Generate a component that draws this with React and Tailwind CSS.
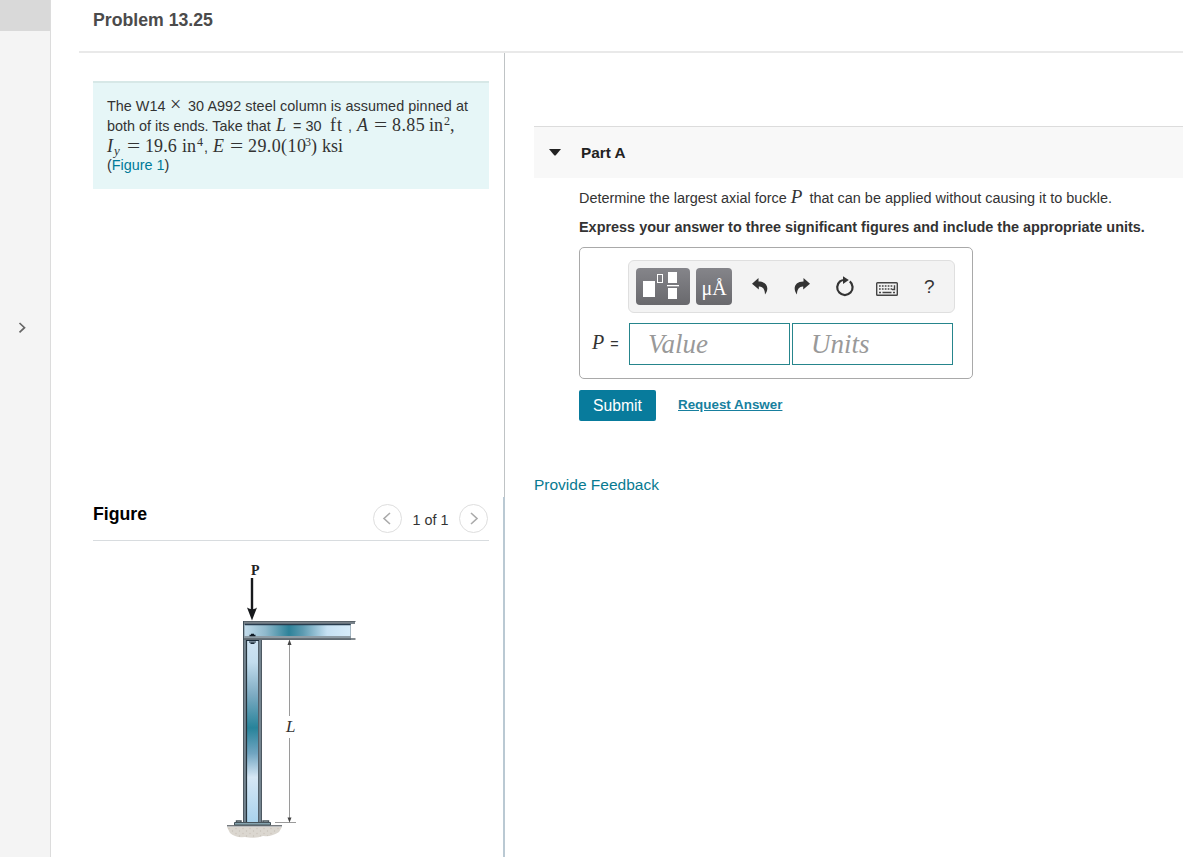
import { useState } from "react";

export default function App() {
  return (
    <div className="flex h-[857px] w-[1183px] overflow-hidden bg-white font-['Liberation_Sans',Arial,sans-serif] text-[#333]">
      <Sidebar />
      <div className="flex min-w-0 flex-1 flex-col">
        <header className="ml-7 h-[53px] shrink-0 border-b-2 border-[#e9e9e9] pt-2 pl-3.5">
          <h1 className="text-[17.7px] leading-6 font-bold text-[#4b4b4b]">Problem 13.25</h1>
        </header>
        <main className="flex min-h-0 flex-1">
          <div className="flex w-[454px] shrink-0 flex-col">
            <section className="h-[444px] shrink-0 border-r border-[#bfc3c5] pt-7 pl-[42px]">
              <ProblemStatement />
            </section>
            <FigurePanel />
          </div>
          <PartPanel />
        </main>
      </div>
    </div>
  );
}

function Sidebar() {
  return (
    <aside className="flex w-[51px] shrink-0 flex-col border-r border-[#dcdcdc] bg-[#f4f4f4]">
      <div className="h-[31px] bg-[#d9d9d9]" />
      <button type="button" aria-label="Expand" className="mt-[290px] ml-[17px] w-3">
        <svg width="10" height="13" viewBox="0 0 10 13" fill="none" stroke="#666" strokeWidth="1.7">
          <path d="M2.5 2 L7.5 6.7 L2.5 11.4" />
        </svg>
      </button>
    </aside>
  );
}

function MathText({ italic = false, className = "", children }) {
  return (
    <span className={`font-['Liberation_Serif','Times_New_Roman',serif] ${italic ? "italic" : ""} ${className}`}>
      {children}
    </span>
  );
}

function Equals() {
  return (
    <span className="w-[18px]">
      <MathText className="inline-block origin-left scale-x-130 text-[18px] leading-none">=</MathText>
    </span>
  );
}

function ProblemStatement() {
  return (
    <div className="h-[108px] w-[396px] border-t-2 border-[#d7e8e7] bg-[#e6f6f7] pt-[11px] pl-3.5 text-[14.4px] whitespace-nowrap text-[#333]">
      <p className="flex h-5 items-baseline leading-5">
        <span className="w-[63px]">The W14</span>
        <MathText className="w-[18px] text-[20px] leading-none">×</MathText>
        <span className="tracking-[0.06px]">30 A992 steel column is assumed pinned at</span>
      </p>
      <p className="mt-px flex h-5 items-baseline leading-5">
        <span className="w-[169px]">both of its ends. Take that</span>
        <MathText italic className="w-[17px] text-[18px]">L</MathText>
        <span className="w-[37px]">= 30</span>
        <MathText className="w-[18px] text-[18px] tracking-[1px]">ft</MathText>
        <span className="w-[9px]">,</span>
        <MathText italic className="w-[17px] text-[18px]">A</MathText>
        <Equals />
        <MathText className="w-[37px] text-[18px] tracking-[0.4px]">8.85</MathText>
        <MathText className="w-[15px] text-[18px]">in</MathText>
        <MathText className="-translate-y-1.5 text-[12px]">2</MathText>
        <MathText className="text-[18px]">,</MathText>
      </p>
      <p className="mt-px -mb-px flex h-5 items-baseline leading-5">
        <MathText italic className="w-[7px] text-[18px]">I</MathText>
        <MathText italic className="w-[13px] translate-y-[3px] text-[13px]">y</MathText>
        <Equals />
        <MathText className="w-[37px] text-[18px] tracking-[0.1px]">19.6</MathText>
        <MathText className="w-[15px] text-[18px]">in</MathText>
        <MathText className="w-[7px] -translate-y-1.5 text-[12px]">4</MathText>
        <span className="w-[9px]">,</span>
        <MathText italic className="w-[17px] text-[18px]">E</MathText>
        <Equals />
        <MathText className="w-[57px] text-[18px] tracking-[0.4px]">29.0(10</MathText>
        <MathText className="w-[6px] -translate-y-1.5 text-[12px]">3</MathText>
        <MathText className="w-[11px] text-[18px]">)</MathText>
        <MathText className="text-[18px]">ksi</MathText>
      </p>
      <p className="h-5 leading-5">
        (<a href="#figure" className="text-[#007a99]">Figure 1</a>)
      </p>
    </div>
  );
}

function FigurePanel() {
  return (
    <section id="figure" className="flex-1 border-r-2 border-[#bac9d3] pl-[42px]">
      <div className="flex h-11 w-[396px] border-b border-[#d8dcdf]">
        <h2 className="mt-[5px] w-[280px] text-[17.7px] leading-6 font-bold text-black">Figure</h2>
        <PageButton label="Previous" path="M17 9 L11 14.5 L17 20" />
        <span className="mt-[13px] w-[57px] text-center text-[14.4px] leading-5">1 of 1</span>
        <PageButton label="Next" path="M12 9 L18 14.5 L12 20" />
      </div>
      <ColumnDrawing />
    </section>
  );
}

function PageButton({ label, path }) {
  return (
    <button
      type="button"
      aria-label={label}
      className="mt-[7px] flex size-[29px] shrink-0 items-center justify-center rounded-full border border-[#dedede]"
    >
      <svg width="29" height="29" viewBox="0 0 29 29" className="shrink-0" fill="none" stroke="#aaa" strokeWidth="1.6">
        <path d={path} />
      </svg>
    </button>
  );
}

// steel column carrying a beam, with the load P and the length L
function ColumnDrawing() {
  return (
    <svg width="150" height="286" viewBox="220 555 150 286" className="mt-[14px] ml-[127px]">
      <defs>
        <linearGradient id="beam" x1="0" x2="1">
          <stop offset="0" stopColor="#c3dceb" />
          <stop offset="0.2" stopColor="#8fb9cc" />
          <stop offset="0.42" stopColor="#2d8299" />
          <stop offset="0.55" stopColor="#5d9bb1" />
          <stop offset="0.78" stopColor="#c6e1f3" />
          <stop offset="1" stopColor="#d6ecfa" />
        </linearGradient>
        <linearGradient id="column" x1="0" x2="0" y1="0" y2="1">
          <stop offset="0" stopColor="#cfe4f3" />
          <stop offset="0.12" stopColor="#c3ddee" />
          <stop offset="0.3" stopColor="#7dabc2" />
          <stop offset="0.48" stopColor="#27839a" />
          <stop offset="0.62" stopColor="#71a5c1" />
          <stop offset="0.75" stopColor="#d6e7f5" />
          <stop offset="1" stopColor="#a8d2ec" />
        </linearGradient>
        <pattern id="gravel" width="7" height="5" patternUnits="userSpaceOnUse">
          <rect width="7" height="5" fill="#dbd7d0" />
          <circle cx="1.5" cy="1" r="0.7" fill="#c7c1b8" />
          <circle cx="5" cy="3.5" r="0.8" fill="#cdc7be" />
        </pattern>
      </defs>

      <path d="M227 827 H282 L279 832 Q272 837 263 836 Q254 839 245 837 Q235 838 230 833 Z" fill="url(#gravel)" />
      <rect x="227" y="825" width="55" height="1.5" fill="#777b7e" />

      <rect x="243" y="638" width="19" height="186" fill="#74848f" />
      <path d="M243.5 638 V824 M261.5 638 V824" stroke="#4d5962" />
      <rect x="247" y="640" width="11" height="183" fill="url(#column)" />
      <path d="M246.5 640 V824" stroke="#26343d" strokeWidth="1.2" />
      <path d="M258.5 640 V824" stroke="#53616b" />
      <path d="M234.5 825 V822.5 H270.5 V825 Z" fill="#86a3ae" stroke="#46545b" />
      <path d="M236.5 822 V821 H241 V822 M263 822 V821 H268.5 V822" fill="none" stroke="#46545b" strokeWidth="1.4" />

      <rect x="243" y="621" width="108" height="19" fill="#74848f" />
      <rect x="244.5" y="625" width="106" height="11" fill="url(#beam)" />
      <rect x="243" y="621" width="112" height="3" fill="#78828a" />
      <path d="M243 621.5 H355.5" stroke="#596269" />
      <path d="M245 624.5 H350.5" stroke="#283c4e" strokeWidth="1.4" />
      <rect x="244" y="636" width="107" height="3" fill="#8e9ca5" />
      <path d="M243 639 H355.5" stroke="#596269" strokeWidth="1.5" />
      <path d="M243.5 621 V640" stroke="#3f4e58" />
      <path d="M249.5 635.5 H255.5 M251 634.5 H254" stroke="#101b26" strokeWidth="1.4" />
      <path d="M246 640.5 H259 M249 642 H256 M250.5 643.3 H254.5" stroke="#1c2c3a" strokeWidth="1.2" />

      <path d="M252 578 V610" stroke="#17191c" strokeWidth="2.4" />
      <path d="M252 620.5 L247 607.5 Q252 611 257 607.5 Z" fill="#17191c" />
      <text x="251" y="574.5" fontFamily="'Liberation Serif', serif" fontSize="14" fontWeight="bold" fill="#222">
        P
      </text>

      <path d="M289.5 642 V716 M289.5 738 V820 M275 822.5 H296" stroke="#9a9a9a" />
      <path d="M289.5 639.5 L287.5 645 H291.5 Z M289.5 822.5 L287.5 817.5 H291.5 Z" fill="#444" />
      <text x="286" y="732" fontFamily="'Liberation Serif', serif" fontSize="17" fontStyle="italic" fill="#333">
        L
      </text>
    </svg>
  );
}

function PartPanel() {
  return (
    <section className="min-w-0 flex-1 pt-[73px] pl-[29px]">
      <div className="flex h-[52px] items-center border-t border-[#dcdcdc] bg-[#f8f8f8] pl-[15px]">
        <svg width="12" height="7" viewBox="0 0 12 7" fill="#222">
          <path d="M0 0 H12 L7 6 Q6 7 5 6 Z" />
        </svg>
        <h2 className="ml-5 text-[15.3px] leading-5 font-bold text-[#222]">Part A</h2>
      </div>
      <div className="pt-[9px] pl-[45px] whitespace-nowrap">
        <p className="h-5 text-[14.45px] leading-5">
          Determine the largest axial force{" "}
          <MathText italic className="mr-[3px] text-[19px] leading-none">P</MathText>
          {" "}that can be applied without causing it to buckle.
        </p>
        <p className="mt-[10px] h-5 text-[14.43px] leading-5 font-bold">
          Express your answer to three significant figures and include the appropriate units.
        </p>
        <AnswerBox />
        <div className="mt-[11px] flex">
          <button type="button" className="h-[31px] w-[77px] rounded-[2px] bg-[#087b9c] text-[15.7px] text-white">Submit</button>
          <a href="#answer" className="mt-[5px] ml-[22px] text-[13.4px] leading-5 font-bold text-[#177f9e] underline">
            Request Answer
          </a>
        </div>
      </div>
      <a href="#feedback" className="mt-[54px] block text-[15.5px] leading-5 text-[#087a91]">Provide Feedback</a>
    </section>
  );
}

function AnswerBox() {
  const [value, setValue] = useState("");
  const [units, setUnits] = useState("");
  const field =
    "h-[42px] w-[161px] border border-[#26858c] bg-white pl-[18px] font-['Liberation_Serif',serif] text-[27px] italic outline-none placeholder:text-[#999]";

  return (
    <div className="mt-2.5 h-[132px] w-[394px] rounded-[5px] border border-[#a9a9a9] pt-3">
      <Toolbar />
      <div className="mt-[10px] flex items-center">
        <label htmlFor="value" className="w-[49px] shrink-0 pl-3 text-[14.4px]">
          <MathText italic className="mr-0.5 text-[20px] leading-none">P</MathText> =
        </label>
        <input id="value" value={value} onChange={(e) => setValue(e.target.value)} placeholder="Value" className={field} />
        <input value={units} onChange={(e) => setUnits(e.target.value)} placeholder="Units" className={`ml-0.5 ${field}`} />
      </div>
    </div>
  );
}

function Toolbar() {
  return (
    <div className="ml-12 flex h-[53px] w-[327px] items-center rounded-md border border-[#dfdfdf] bg-[#f3f3f3] pl-[7px] text-[#333]">
      <button type="button" aria-label="Templates" className="h-[37px] w-[54px] rounded-[4px] bg-linear-to-b from-[#85858a] to-[#69696d]">
        <svg width="54" height="37" viewBox="0 0 54 37" fill="#fff">
          <rect x="7" y="13" width="12" height="16" />
          <rect x="21.5" y="6.5" width="5" height="8" fill="none" stroke="#fff" />
          <rect x="32" y="4" width="9" height="11" />
          <rect x="31" y="17" width="12" height="1.3" />
          <rect x="32" y="20" width="9" height="11" />
        </svg>
      </button>
      <button
        type="button"
        aria-label="Units"
        className="ml-1.5 h-[37px] w-9 rounded-[4px] bg-linear-to-b from-[#85858a] to-[#69696d] pt-0.5 font-['Liberation_Serif',serif] text-[20px] leading-none text-white"
      >
        μÅ
      </button>
      <svg width="16" height="18" viewBox="0 0 16 18" fill="#333" className="ml-5">
        <path d="M6.5 0 L0 5.8 L6.8 11.5 V8.4 C10.5 8.2 13 11 13 16.5 C17.5 11 15.5 3.5 6.5 3.5 Z" />
      </svg>
      <svg width="16" height="18" viewBox="0 0 16 18" fill="#333" className="ml-[26px]">
        <path d="M9.5 0 L16 5.8 L9.2 11.5 V8.4 C5.5 8.2 3 11 3 16.5 C-1.5 11 0.5 3.5 9.5 3.5 Z" />
      </svg>
      <svg width="20" height="22" viewBox="0 0 20 22" className="ml-[25px]">
        <path d="M14.8 5.4 A7.7 7.7 0 1 1 5 5.4 Q7 3.9 9.5 4" fill="none" stroke="#333" strokeWidth="2.2" />
        <path d="M8 0.3 L13.8 4 L8 8 Z" fill="#333" />
      </svg>
      <svg width="22" height="14" viewBox="0 0 22 14" className="mt-1 ml-[21px]" fill="none" stroke="#444">
        <rect x="0.7" y="0.7" width="20.6" height="12.6" rx="0.8" strokeWidth="1.4" />
        <path d="M3 4 H17 M3 7 H16" strokeWidth="1.5" strokeDasharray="1.7 1.2" />
        <path d="M3 10.5 H5 M6.5 10.5 H15.5 M17 10.5 H19 M18.5 3.2 V7.5 H16" strokeWidth="1.4" />
      </svg>
      <span className="ml-[26px] text-[19px] leading-none">?</span>
    </div>
  );
}
